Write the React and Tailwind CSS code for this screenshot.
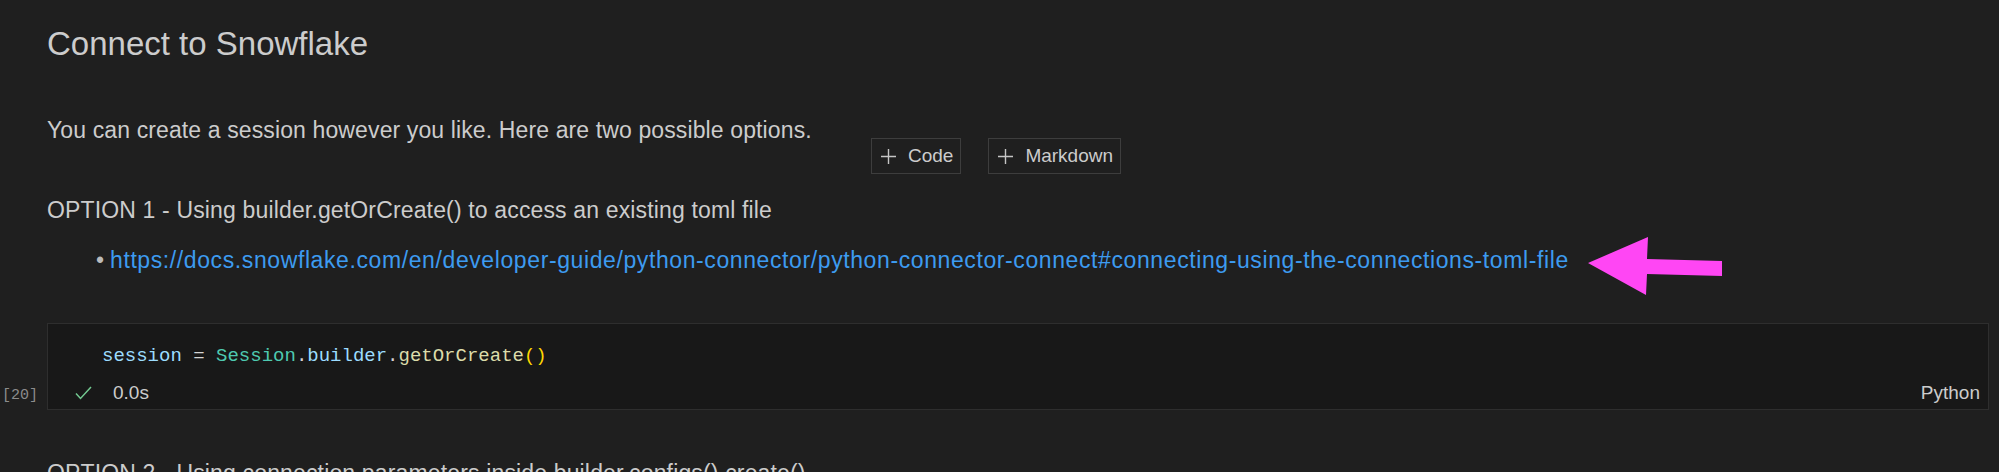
import React from 'react';

const sans = { fontFamily: '"Liberation Sans", Arial, sans-serif' };
const mono = { fontFamily: '"Liberation Mono", "DejaVu Sans Mono", monospace' };

const PlusIcon = () => (
	<svg width="17" height="17" viewBox="0 0 17 17" fill="none">
		<path d="M8.5 1v15M1 8.5h15" stroke="#c5c5c5" strokeWidth="1.4" />
	</svg>
);

const AddButton = ({ label }) => (
	<button className="flex items-center gap-[11px] h-[36px] pl-[8px] pr-[7px] border border-[#3d3d3d] bg-[#1f1f1f] text-[19px] text-[#cccccc]">
		<PlusIcon />
		<span>{label}</span>
	</button>
);

const CodeCell = () => (
	<div className="flex mt-[48px]">
		<div className="w-[47px] flex flex-col justify-end pb-[4px] pl-[2px] text-[15px] leading-[20px] text-[#8c8c8c]" style={mono}>
			[20]
		</div>
		<div className="flex-1 mr-[10px] h-[87px] border border-[#2e2e2e] bg-[#181818] flex flex-col">
			<div className="pt-[20px] pl-[54px] text-[19px] leading-[24px]" style={mono}>
				<span className="text-[#9cdcfe]">session</span>
				<span className="text-[#d4d4d4]"> = </span>
				<span className="text-[#4ec9b0]">Session</span>
				<span className="text-[#d4d4d4]">.</span>
				<span className="text-[#9cdcfe]">builder</span>
				<span className="text-[#d4d4d4]">.</span>
				<span className="text-[#dcdcaa]">getOrCreate</span>
				<span className="text-[#ffd700]">()</span>
			</div>
			<div className="flex items-center mt-[13px] pl-[27px] pr-[8px] text-[19px] leading-[24px] text-[#cccccc]">
				<svg width="17" height="14" viewBox="0 0 17 14" fill="none">
					<path d="M1 7.5l4.5 5L16 1" stroke="#73c991" strokeWidth="1.5" />
				</svg>
				<span className="ml-[21px]">0.0s</span>
				<span className="ml-auto">Python</span>
			</div>
		</div>
	</div>
);

export default function App() {
	return (
		<div className="relative w-full h-[472px] overflow-hidden bg-[#1f1f1f] text-[#cccccc]" style={sans}>
			<div className="pl-[47px] pt-[24px]">
				<h2 className="text-[33px] leading-[40px]">Connect to Snowflake</h2>
				<p className="mt-[51px] text-[23px] leading-[30px] tracking-[0.12px]">
					You can create a session however you like. Here are two possible options.
				</p>
			</div>

			<div className="flex justify-center gap-[27px] pr-[7px] -mt-[7px]">
				<AddButton label="Code" />
				<AddButton label="Markdown" />
			</div>

			<div className="pl-[47px]">
				<p className="mt-[21px] text-[23px] leading-[30px] tracking-[0.15px]">
					OPTION 1 - Using builder.getOrCreate() to access an existing toml file
				</p>
				<div className="flex mt-[20px] pl-[49px] text-[23px] leading-[30px]">
					<span className="w-[14px] text-[#bbbbbb]">•</span>
					<a className="text-[#3d9bf0] tracking-[0.6px]" href="#">
						https://docs.snowflake.com/en/developer-guide/python-connector/python-connector-connect#connecting-using-the-connections-toml-file
					</a>
				</div>
			</div>

			<CodeCell />

			<div className="pl-[47px]">
				<p className="mt-[48px] text-[23px] leading-[30px] tracking-[0.15px]">
					OPTION 2 - Using connection parameters inside builder.configs().create()
				</p>
			</div>

			<svg className="absolute left-[1585px] top-[234px]" width="140" height="64" viewBox="0 0 140 64">
				<polygon points="3,29 63,3 62,25 137,27 137,42 62,40 61,61" fill="#ff46f4" />
			</svg>
		</div>
	);
}
